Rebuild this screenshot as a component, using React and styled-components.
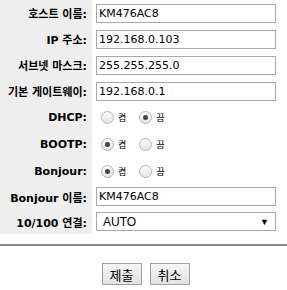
import React, { useState } from "react";
import styled, { createGlobalStyle } from "styled-components";

const GlobalStyle = createGlobalStyle`
  html, body {
    margin: 0;
    padding: 0;
    background: #fff;
  }
  body {
    font-family: Verdana, "DejaVu Sans", "Noto Sans CJK KR", sans-serif;
    font-size: 11px;
    color: #000;
  }
`;

const Page = styled.div`
  width: 287px;
`;

const Form = styled.div`
  display: grid;
  grid-template-columns: 92px 1fr;
`;

const Label = styled.div`
  background: #eeeeee;
  height: ${(p) => p.h}px;
  display: flex;
  align-items: center;
  justify-content: flex-end;
  padding-right: 5px;
  font-weight: bold;
  white-space: nowrap;
`;

const Field = styled.div`
  height: ${(p) => p.h}px;
  display: flex;
  align-items: center;
  padding-left: 4px;
  padding-right: 12px;
`;

const TextInput = styled.input`
  box-sizing: border-box;
  width: 180px;
  height: 19px;
  margin: 0;
  padding: 0 2px;
  border: 1px solid #a9a9a9;
  font-family: Verdana, "DejaVu Sans", sans-serif;
  font-size: 11px;
  color: #000;
  outline: none;
`;

const RadioGroup = styled.div`
  display: flex;
  align-items: center;
`;

const RadioLabel = styled.label`
  display: flex;
  align-items: center;
  margin-right: 8px;
  font-size: 9px;
  cursor: pointer;
`;

const RadioCircle = styled.span`
  box-sizing: border-box;
  width: 13px;
  height: 13px;
  border-radius: 50%;
  border: 1px solid #b4b4b4;
  background: linear-gradient(#fdfdfd, #e4e4e4);
  margin: 0 4px 0 5px;
  display: flex;
  align-items: center;
  justify-content: center;
  &::after {
    content: "";
    width: 5px;
    height: 5px;
    border-radius: 50%;
    background: ${(p) => (p.checked ? "#444" : "transparent")};
  }
`;

const Select = styled.div`
  box-sizing: border-box;
  width: 180px;
  height: 19px;
  border: 1px solid #a9a9a9;
  display: flex;
  align-items: center;
  justify-content: space-between;
  padding: 0 6px 0 6px;
  font-family: Arial, "Liberation Sans", sans-serif;
  font-size: 12px;
`;

const Arrow = styled.span`
  font-size: 9px;
`;

const Divider = styled.div`
  margin-top: 10px;
  border-top: 2px solid #8a8a8a;
`;

const Buttons = styled.div`
  display: flex;
  justify-content: center;
  gap: 8px;
  padding-top: 17px;
  padding-left: 4px;
`;

const Button = styled.button`
  box-sizing: border-box;
  width: 40px;
  height: 22px;
  border: 1px solid #a0a0a0;
  background: linear-gradient(#f6f6f6, #e2e2e2);
  font-family: "Noto Sans CJK KR", sans-serif;
  font-size: 13px;
  padding: 0;
  color: #000;
`;

const Radios = ({ value, onChange }) => (
  <RadioGroup>
    <RadioLabel onClick={() => onChange(true)}>
      <RadioCircle checked={value} />켬
    </RadioLabel>
    <RadioLabel onClick={() => onChange(false)}>
      <RadioCircle checked={!value} />끔
    </RadioLabel>
  </RadioGroup>
);

const App = () => {
  const [dhcp, setDhcp] = useState(false);
  const [bootp, setBootp] = useState(true);
  const [bonjour, setBonjour] = useState(true);

  const inputs = [
    ["호스트 이름:", "KM476AC8"],
    ["IP 주소:", "192.168.0.103"],
    ["서브넷 마스크:", "255.255.255.0"],
    ["기본 게이트웨이:", "192.168.0.1"],
  ];

  return (
    <Page>
      <GlobalStyle />
      <Form>
        {inputs.map(([label, val]) => (
          <React.Fragment key={label}>
            <Label h={26}>{label}</Label>
            <Field h={26}>
              <TextInput defaultValue={val} />
            </Field>
          </React.Fragment>
        ))}
        <Label h={27}>DHCP:</Label>
        <Field h={27}>
          <Radios value={dhcp} onChange={setDhcp} />
        </Field>
        <Label h={27}>BOOTP:</Label>
        <Field h={27}>
          <Radios value={bootp} onChange={setBootp} />
        </Field>
        <Label h={26}>Bonjour:</Label>
        <Field h={26}>
          <Radios value={bonjour} onChange={setBonjour} />
        </Field>
        <Label h={25}>Bonjour 이름:</Label>
        <Field h={25}>
          <TextInput defaultValue="KM476AC8" />
        </Field>
        <Label h={25}>10/100 연결:</Label>
        <Field h={25}>
          <Select>
            AUTO<Arrow>▼</Arrow>
          </Select>
        </Field>
      </Form>
      <Divider />
      <Buttons>
        <Button>제출</Button>
        <Button>취소</Button>
      </Buttons>
    </Page>
  );
};

export default App;
